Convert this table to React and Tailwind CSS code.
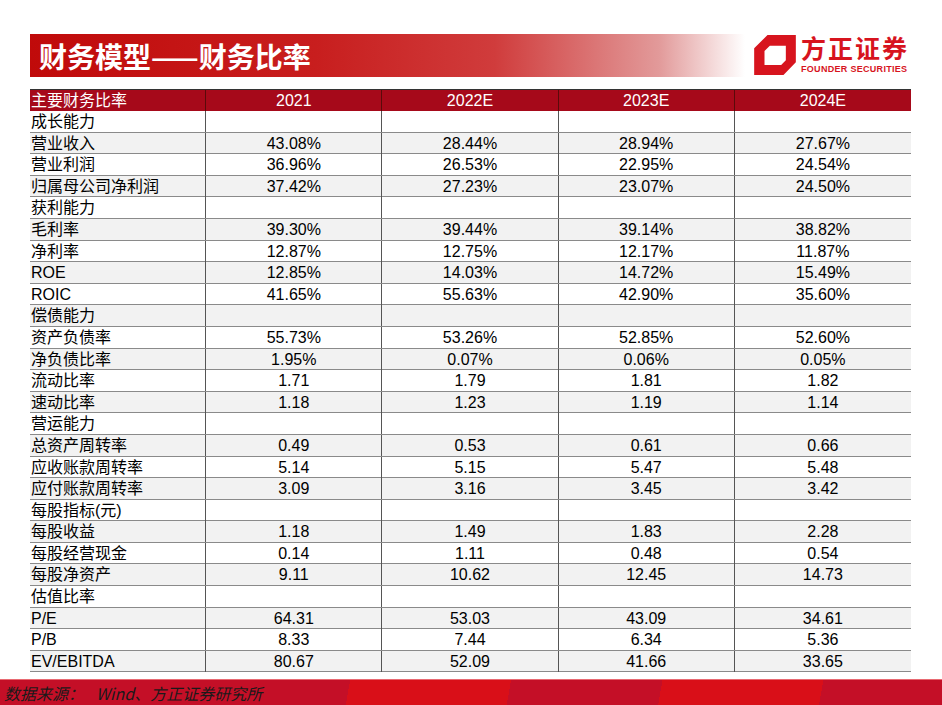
import React from "react";

const rows = [
  ["成长能力", null],
  ["营业收入", ["43.08%", "28.44%", "28.94%", "27.67%"]],
  ["营业利润", ["36.96%", "26.53%", "22.95%", "24.54%"]],
  ["归属母公司净利润", ["37.42%", "27.23%", "23.07%", "24.50%"]],
  ["获利能力", null],
  ["毛利率", ["39.30%", "39.44%", "39.14%", "38.82%"]],
  ["净利率", ["12.87%", "12.75%", "12.17%", "11.87%"]],
  ["ROE", ["12.85%", "14.03%", "14.72%", "15.49%"]],
  ["ROIC", ["41.65%", "55.63%", "42.90%", "35.60%"]],
  ["偿债能力", null],
  ["资产负债率", ["55.73%", "53.26%", "52.85%", "52.60%"]],
  ["净负债比率", ["1.95%", "0.07%", "0.06%", "0.05%"]],
  ["流动比率", ["1.71", "1.79", "1.81", "1.82"]],
  ["速动比率", ["1.18", "1.23", "1.19", "1.14"]],
  ["营运能力", null],
  ["总资产周转率", ["0.49", "0.53", "0.61", "0.66"]],
  ["应收账款周转率", ["5.14", "5.15", "5.47", "5.48"]],
  ["应付账款周转率", ["3.09", "3.16", "3.45", "3.42"]],
  ["每股指标(元)", null],
  ["每股收益", ["1.18", "1.49", "1.83", "2.28"]],
  ["每股经营现金", ["0.14", "1.11", "0.48", "0.54"]],
  ["每股净资产", ["9.11", "10.62", "12.45", "14.73"]],
  ["估值比率", null],
  ["P/E", ["64.31", "53.03", "43.09", "34.61"]],
  ["P/B", ["8.33", "7.44", "6.34", "5.36"]],
  ["EV/EBITDA", ["80.67", "52.09", "41.66", "33.65"]],
];

const font = "font-['Liberation_Sans','Noto_Sans_CJK_SC',sans-serif]";
const cjk = "font-['Noto_Sans_CJK_SC',sans-serif]";

function Logo() {
  return (
    <div className="flex items-center gap-[5px]">
      <svg width="42" height="40" viewBox="5 10 125 120">
        <path
          fillRule="evenodd"
          fill="#d7141e"
          d="M45 10 L130 10 L130 92 L93 130 L5 130 L5 50 Z M52 42 L100 42 L100 86 L86 100 L36 100 L36 58 Z"
        />
      </svg>
      <div className="flex flex-col items-start">
        <div className={`${cjk} text-[25px] font-bold leading-[25px] h-[25px] text-[#d7141e] tracking-[2px]`}>方正证券</div>
        <div className="font-['Liberation_Sans',sans-serif] text-[9px] font-bold leading-[10px] text-[#d7141e] tracking-[0.3px] mt-[4px]">
          FOUNDER SECURITIES
        </div>
      </div>
    </div>
  );
}

export default function App() {
  return (
    <div className={`w-[942px] h-[705px] bg-white flex flex-col overflow-hidden ${font}`}>
      <div className="flex items-center pt-[34px] pl-[30px]">
        <div className="w-[715px] h-[43px] flex items-center pl-[9px] bg-[linear-gradient(90deg,#c00a0a_0%,#c81e1e_40%,#d03c3c_65%,#e29a9a_88%,#ffffff_100%)]">
          <span className={`${cjk} text-white text-[28px] font-bold leading-none`}>财务模型——财务比率</span>
        </div>
        <div className="ml-[9px] -mt-[2px]">
          <Logo />
        </div>
      </div>

      <div className="ml-[30px] mt-[12px] w-[881px] flex flex-col text-[16px] text-black">
        <div className="grid grid-cols-5 h-[22px] bg-[#a6091a] text-white border-t border-[#333]">
          <div className="pl-[1px] leading-[21px] border-r border-[#5a0a0a]">主要财务比率</div>
          {["2021", "2022E", "2023E", "2024E"].map((y, i) => (
            <div key={y} className={`text-center leading-[21px] ${i < 3 ? "border-r border-[#5a0a0a]" : ""}`}>
              {y}
            </div>
          ))}
        </div>
        {rows.map(([label, vals], idx) => (
          <div
            key={label}
            className={`grid grid-cols-5 h-[21.6px] border-b border-[#8a8a8a] ${idx % 2 === 1 ? "bg-[#f2f2f2]" : "bg-white"}`}
          >
            <div className="pl-[1px] leading-[21px] border-r border-[#555] whitespace-nowrap">{label}</div>
            {[0, 1, 2, 3].map((i) => (
              <div key={i} className={`text-center leading-[21px] ${i < 3 ? "border-r border-[#555]" : ""}`}>
                {vals ? vals[i] : ""}
              </div>
            ))}
          </div>
        ))}
      </div>

      <div className="mt-auto h-[26px] flex items-center pl-[4px] pt-[1px] border-t border-[#e86a72] bg-[linear-gradient(100deg,#c40f27_0%,#c40f27_37%,#d90f18_37%,#d90f18_54%,#c40f27_54%,#c40f27_70%,#d90f18_70%,#d90f18_87%,#c40f27_87%)]">
        <span className={`${cjk} italic text-[16px] leading-none text-[#1a1a1a] whitespace-nowrap`}>
          数据来源：<span className="ml-[12px]">Wind、方正证券研究所</span>
        </span>
      </div>
    </div>
  );
}
